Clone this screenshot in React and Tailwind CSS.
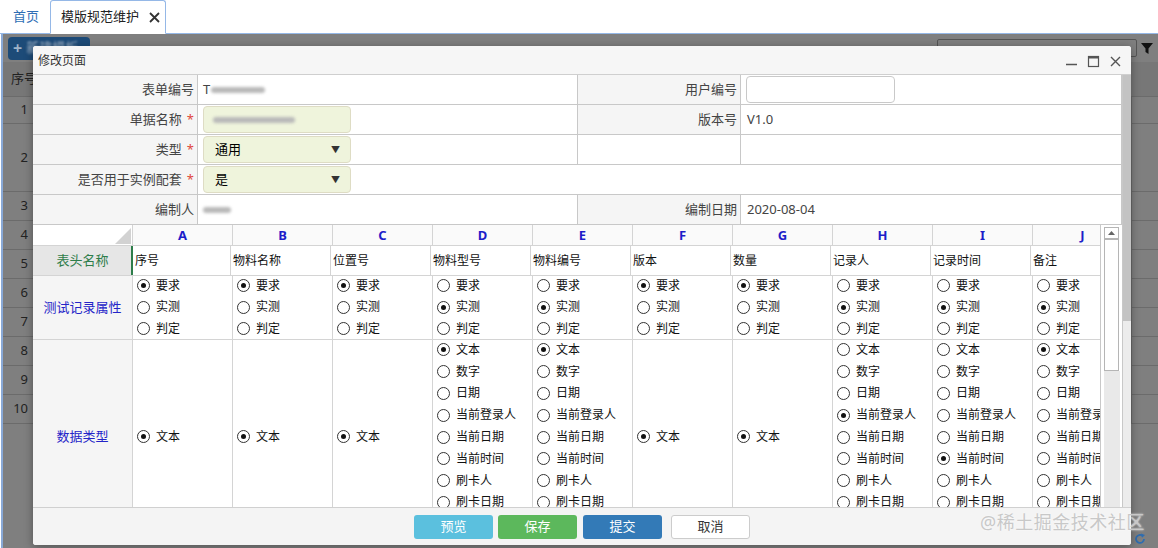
import React from "react";

const cols = [
  { key: "A", name: "序号", attr: 0, type: null },
  { key: "B", name: "物料名称", attr: 0, type: null },
  { key: "C", name: "位置号", attr: 0, type: null },
  { key: "D", name: "物料型号", attr: 1, type: 0 },
  { key: "E", name: "物料编号", attr: 1, type: 0 },
  { key: "F", name: "版本", attr: 0, type: null },
  { key: "G", name: "数量", attr: 0, type: null },
  { key: "H", name: "记录人", attr: 1, type: 3 },
  { key: "I", name: "记录时间", attr: 1, type: 5 },
  { key: "J", name: "备注", attr: 1, type: 0 },
];

const attrs = ["要求", "实测", "判定"];
const types = ["文本", "数字", "日期", "当前登录人", "当前日期", "当前时间", "刷卡人", "刷卡日期", "刷卡时间"];

function Radio({ label, checked, h = "h-[21.6px]" }) {
  return (
    <div className={`flex items-center ${h} gap-[6px] pl-[4px] shrink-0`}>
      <span className="w-[13px] h-[13px] rounded-full border border-[#333] flex items-center justify-center shrink-0 bg-white">
        {checked && <span className="w-[5px] h-[5px] rounded-full bg-[#111]" />}
      </span>
      <span className="whitespace-nowrap text-[#111]">{label}</span>
    </div>
  );
}

function Select({ value }) {
  return (
    <div className="ml-[5px] w-[148px] h-[27px] rounded-[4px] border border-[#dedcc4] bg-[#eff4dc] flex items-center justify-between pl-[11px] pr-[10px]">
      <span>{value}</span>
      <span className="text-[9px] text-[#333]">▼</span>
    </div>
  );
}

function Blur({ w }) {
  return <span className={`inline-block h-[6px] ${w} bg-[#b9b9b9] blur-[1.5px] rounded-sm`} />;
}

function Req() {
  return <span className="text-[#e0463c] ml-[5px]">*</span>;
}

const label = "shrink-0 bg-[#f5f5f5] border-r border-[#c8c8c8] flex items-center justify-end pr-[3px] text-[#444]";
const value = "shrink-0 border-r border-[#c8c8c8] flex items-center";

function FormTable() {
  return (
    <div className="text-[13px]">
      <div className="flex h-[30px] border-b border-[#c8c8c8]">
        <div className={`${label} w-[165px]`}>表单编号</div>
        <div className={`${value} w-[380px] pl-[5px] gap-[1px]`}>
          <span className="text-[#444]">T</span>
          <Blur w="w-[54px]" />
        </div>
        <div className={`${label} w-[163px]`}>用户编号</div>
        <div className={`${value} w-[381px] pl-[5px]`}>
          <div className="w-[149px] h-[27px] rounded-[4px] border border-[#c9c9c9] bg-white" />
        </div>
      </div>
      <div className="flex h-[30px] border-b border-[#c8c8c8]">
        <div className={`${label} w-[165px]`}>单据名称<Req /></div>
        <div className={`${value} w-[380px]`}>
          <div className="ml-[5px] w-[148px] h-[27px] rounded-[4px] border border-[#dedcc4] bg-[#eff4dc] flex items-center pl-[9px]">
            <Blur w="w-[82px]" />
          </div>
        </div>
        <div className={`${label} w-[163px]`}>版本号</div>
        <div className={`${value} w-[381px] pl-[6px] text-[#444]`}>V1.0</div>
      </div>
      <div className="flex h-[30px] border-b border-[#c8c8c8]">
        <div className={`${label} w-[165px]`}>类型<Req /></div>
        <div className={`${value} w-[380px]`}><Select value="通用" /></div>
        <div className={`${value} w-[163px]`} />
        <div className={`${value} w-[381px]`} />
      </div>
      <div className="flex h-[30px] border-b border-[#c8c8c8]">
        <div className={`${label} w-[165px]`}>是否用于实例配套<Req /></div>
        <div className={`${value} w-[924px]`}><Select value="是" /></div>
      </div>
      <div className="flex h-[30px] border-b border-[#c8c8c8]">
        <div className={`${label} w-[165px]`}>编制人</div>
        <div className={`${value} w-[380px] pl-[5px]`}><Blur w="w-[28px]" /></div>
        <div className={`${label} w-[163px]`}>编制日期</div>
        <div className={`${value} w-[381px] pl-[6px] text-[#444]`}>2020-08-04</div>
      </div>
    </div>
  );
}

function Sheet() {
  const cell = "w-[100px] shrink-0 border-r border-[#d4d4d4]";
  return (
    <div className="flex text-[12px] leading-none">
      <div className="w-[1067px] overflow-hidden">
        <div className="w-[1100px]">
          <div className="flex h-[21px] border-b border-[#d4d4d4] bg-[#fafafa]">
            <div className={`${cell} relative bg-white`}>
              <svg className="absolute right-[1px] bottom-[1px]" width="16" height="16" viewBox="0 0 16 16">
                <polygon points="16,0 16,16 0,16" fill="#d2d2d2" />
              </svg>
            </div>
            {cols.map((c) => (
              <div key={c.key} className={`${cell} flex items-center justify-center font-bold text-[#1d1dc9] text-[13px]`}>
                {c.key}
              </div>
            ))}
          </div>
          <div className="flex h-[30px] border-b border-[#d4d4d4]">
            <div className={`${cell} bg-[#e6e6e6] flex items-center justify-center text-[#2e7d4a] text-[13px]`}>表头名称</div>
            {cols.map((c, i) => (
              <div
                key={c.key}
                className={`${cell} flex items-center pl-[2px] text-[#111] ${i === 0 ? "border-l-2 border-l-[#2e7d4a] -ml-[2px]" : ""}`}
              >
                {c.name}
              </div>
            ))}
          </div>
          <div className="flex h-[64px] border-b border-[#d4d4d4]">
            <div className={`${cell} bg-[#f5f5f5] flex items-center justify-center text-[#2424c8] text-[13px]`}>测试记录属性</div>
            {cols.map((c) => (
              <div key={c.key} className={`${cell} flex flex-col -mt-[1px]`}>
                {attrs.map((a, j) => (
                  <Radio key={a} label={a} checked={c.attr === j} />
                ))}
              </div>
            ))}
          </div>
          <div className="flex h-[194px] border-b border-[#d4d4d4] overflow-hidden">
            <div className={`${cell} bg-[#f5f5f5] flex items-center justify-center text-[#2424c8] text-[13px]`}>数据类型</div>
            {cols.map((c) => (
              <div key={c.key} className={`${cell} flex flex-col ${c.type === null ? "justify-center" : "-mt-[1px]"}`}>
                {c.type === null ? (
                  <Radio label="文本" checked />
                ) : (
                  types.map((t, j) => <Radio key={t} label={t} checked={c.type === j} h="h-[21.8px]" />)
                )}
              </div>
            ))}
          </div>
        </div>
      </div>
      <div className="w-[22px] shrink-0 border-l border-[#c8c8c8] bg-white flex flex-col items-center pt-[2px]">
        <div className="w-[15px] h-[12px] border border-[#b5b5b5] bg-white flex items-center justify-center">
          <svg width="7" height="4" viewBox="0 0 7 4"><polygon points="0,4 3.5,0 7,4" fill="#666" /></svg>
        </div>
        <div className="w-[15px] h-[132px] border border-[#b5b5b5] bg-white" />
        <div className="w-[16px] flex-1 bg-[#e9e9e9]" />
      </div>
    </div>
  );
}

function Modal() {
  return (
    <div className="absolute left-[33px] top-[46px] w-[1098px] h-[499px] bg-white rounded-[3px] shadow-[0_2px_10px_rgba(0,0,0,0.35)] flex flex-col overflow-hidden">
      <div className="h-[29px] shrink-0 bg-[#f6f6f6] border-b border-[#cfcfcf] flex items-center justify-between pl-[5px] pr-[9px]">
        <span className="text-[12px] text-[#333] pt-[2px]">修改页面</span>
        <div className="flex items-center gap-[9px] text-[#555] pt-[2px]">
          <svg width="13" height="13" viewBox="0 0 13 13"><line x1="1" y1="9.5" x2="12" y2="9.5" stroke="#555" strokeWidth="1.4" /></svg>
          <svg width="13" height="13" viewBox="0 0 13 13"><rect x="1.5" y="1.5" width="10" height="10" fill="none" stroke="#555" strokeWidth="1.2" /><line x1="1.5" y1="2.5" x2="11.5" y2="2.5" stroke="#555" strokeWidth="2" /></svg>
          <svg width="13" height="13" viewBox="0 0 13 13"><path d="M2 2 L11 11 M11 2 L2 11" stroke="#555" strokeWidth="1.4" /></svg>
        </div>
      </div>
      <div className="flex flex-1 min-h-0">
        <div className="w-[1090px] overflow-hidden border-r border-[#c8c8c8]">
          <FormTable />
          <Sheet />
        </div>
        <div className="w-[8px] shrink-0 flex flex-col bg-[#ececec]">
          <div className="h-[246px] bg-[#c3c3c3]" />
        </div>
      </div>
      <div className="h-[38px] shrink-0 bg-[#f4f4f4] border-t border-[#d0d0d0] flex items-center justify-center gap-[5px] text-[13px]">
        <button className="w-[79px] h-[24px] rounded-[3px] bg-[#5bc0de] text-white">预览</button>
        <button className="w-[79px] h-[24px] rounded-[3px] bg-[#5cb85c] text-white">保存</button>
        <button className="w-[79px] h-[24px] rounded-[3px] bg-[#337ab7] text-white ml-[1px]">提交</button>
        <button className="w-[79px] h-[24px] rounded-[3px] bg-white border border-[#ccc] text-[#333] ml-[4px]">取消</button>
      </div>
    </div>
  );
}

function Background() {
  const rows = [
    ["1", "h-[27px]"],
    ["2", "h-[68px]"],
    ["3", "h-[29px]"],
    ["4", "h-[29px]"],
    ["5", "h-[29px]"],
    ["6", "h-[29px]"],
    ["7", "h-[29px]"],
    ["8", "h-[29px]"],
    ["9", "h-[29px]"],
    ["10", "h-[29px]"],
  ];
  return (
    <div className="flex-1 flex flex-col ml-[1px] border-l-2 border-[#89a9d6] bg-[#7f7f7f] text-[13px]">
      <div className="h-[28px] flex items-center justify-between pl-[5px] pr-[4px]">
        <div className="w-[82px] h-[23px] rounded-[4px] bg-[#1d4b78] flex items-center pl-[5px] gap-[4px] text-[#9fb3c8] whitespace-nowrap overflow-hidden">
          <span className="text-[16px] font-bold leading-none">+</span>
          <span className="blur-[1px]">新建模板</span>
        </div>
        <div className="flex items-center gap-[3px]">
          <div className="w-[200px] h-[18px] border border-[#555] rounded-[2px]" />
          <svg width="14" height="14" viewBox="0 0 14 14"><path d="M1 2 H13 L8.5 7.5 V13 L5.5 11 V7.5 Z" fill="#111" /></svg>
        </div>
      </div>
      <div className="flex flex-1">
        <div className="w-[30px] flex flex-col text-[#222] overflow-hidden">
          <div className="h-[35px] bg-[#777] border-b border-[#6b6b6b] flex items-center pl-[8px] whitespace-nowrap">序号</div>
          {rows.map(([n, h]) => (
            <div key={n} className={`${h} border-b border-[#6b6b6b] flex items-center justify-end pr-[5px]`}>{n}</div>
          ))}
        </div>
        <div className="flex-1" />
        <div className="w-[27px] flex flex-col">
          <div className="h-[35px] border-b border-[#6b6b6b] bg-[#777]" />
          {rows.map(([n, h]) => (
            <div key={n} className={`${h} border-b border-[#6b6b6b] border-l border-l-[#6b6b6b]`} />
          ))}
          <div className="flex-1" />
          <div className="h-[18px] flex items-center pl-[2px]">
            <svg width="14" height="14" viewBox="0 0 14 14"><path d="M11 7 A4 4 0 1 1 9.5 3.8" fill="none" stroke="#2f6db0" strokeWidth="1.8" /><polygon points="8,1.5 12,3 9,5.8" fill="#2f6db0" /></svg>
          </div>
        </div>
      </div>
    </div>
  );
}

export default function App() {
  return (
    <div className="w-[1158px] h-[548px] relative overflow-hidden bg-white flex flex-col font-['Noto_Sans','Noto_Sans_CJK_SC',sans-serif]">
      <div className="h-[34px] shrink-0 flex items-end border-b border-[#95b8e7] text-[13px]">
        <div className="w-[50px] h-full flex items-center justify-center text-[#2f6fb5] pl-[2px]">首页</div>
        <div className="w-[116px] h-[34px] -mb-px bg-white border border-[#95b8e7] border-b-white rounded-t-[3px] flex items-center pl-[10px] gap-[10px] text-[#222]">
          <span>模版规范维护</span>
          <svg width="11" height="11" viewBox="0 0 11 11"><path d="M1 1 L10 10 M10 1 L1 10" stroke="#333" strokeWidth="1.8" /></svg>
        </div>
      </div>
      <Background />
      <Modal />
      <div className="absolute left-[980px] top-[509px] text-[18px] text-[#c8c8c8] tracking-[0.5px] [text-shadow:0_0_2px_#fff]">
        @稀土掘金技术社区
      </div>
    </div>
  );
}
